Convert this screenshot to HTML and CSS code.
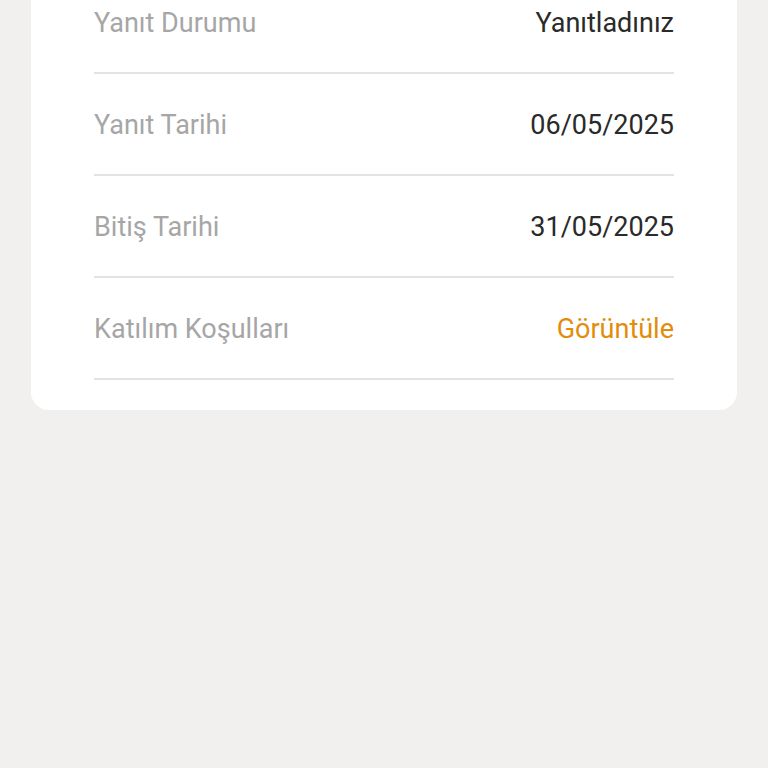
FILE: index.html
```html
<!DOCTYPE html>
<html lang="tr">
<head>
  <meta charset="UTF-8" />
  <title>Anket Detayı</title>
  <link rel="stylesheet" href="styles.css">
</head>
<body>
  <div class="card">
    <div class="row">
      <span class="label">Yanıt Durumu</span>
      <span class="value">Yanıtladınız</span>
    </div>
    <div class="row">
      <span class="label">Yanıt Tarihi</span>
      <span class="value">06/05/2025</span>
    </div>
    <div class="row">
      <span class="label">Bitiş Tarihi</span>
      <span class="value">31/05/2025</span>
    </div>
    <div class="row">
      <span class="label">Katılım Koşulları</span>
      <a class="value link" href="#">Görüntüle</a>
    </div>
  </div>
</body>
</html>
```

FILE: styles.css
```css
body {
  font-family: Roboto, "Noto Sans", sans-serif;
  margin: 0;
  background: #f1f0ee;
  color: #222;
  height: 768px;
  overflow: hidden;
}
.card {
  background: white;
  margin: -28px 31px 0 31px;
  padding: 0 63px 30px 63px;
  border-radius: 0 0 18px 18px;
}
.row {
  height: 98px;
  padding-top: 2px;
  display: flex;
  justify-content: space-between;
  align-items: center;
  border-bottom: 2px solid #e3e3e3;
  font-size: 27px;
}
.label {
  color: #a6a6a6;
}
.value {
  color: #2a2a2a;
}
.link {
  color: #e38c0b;
  text-decoration: none;
}
```
